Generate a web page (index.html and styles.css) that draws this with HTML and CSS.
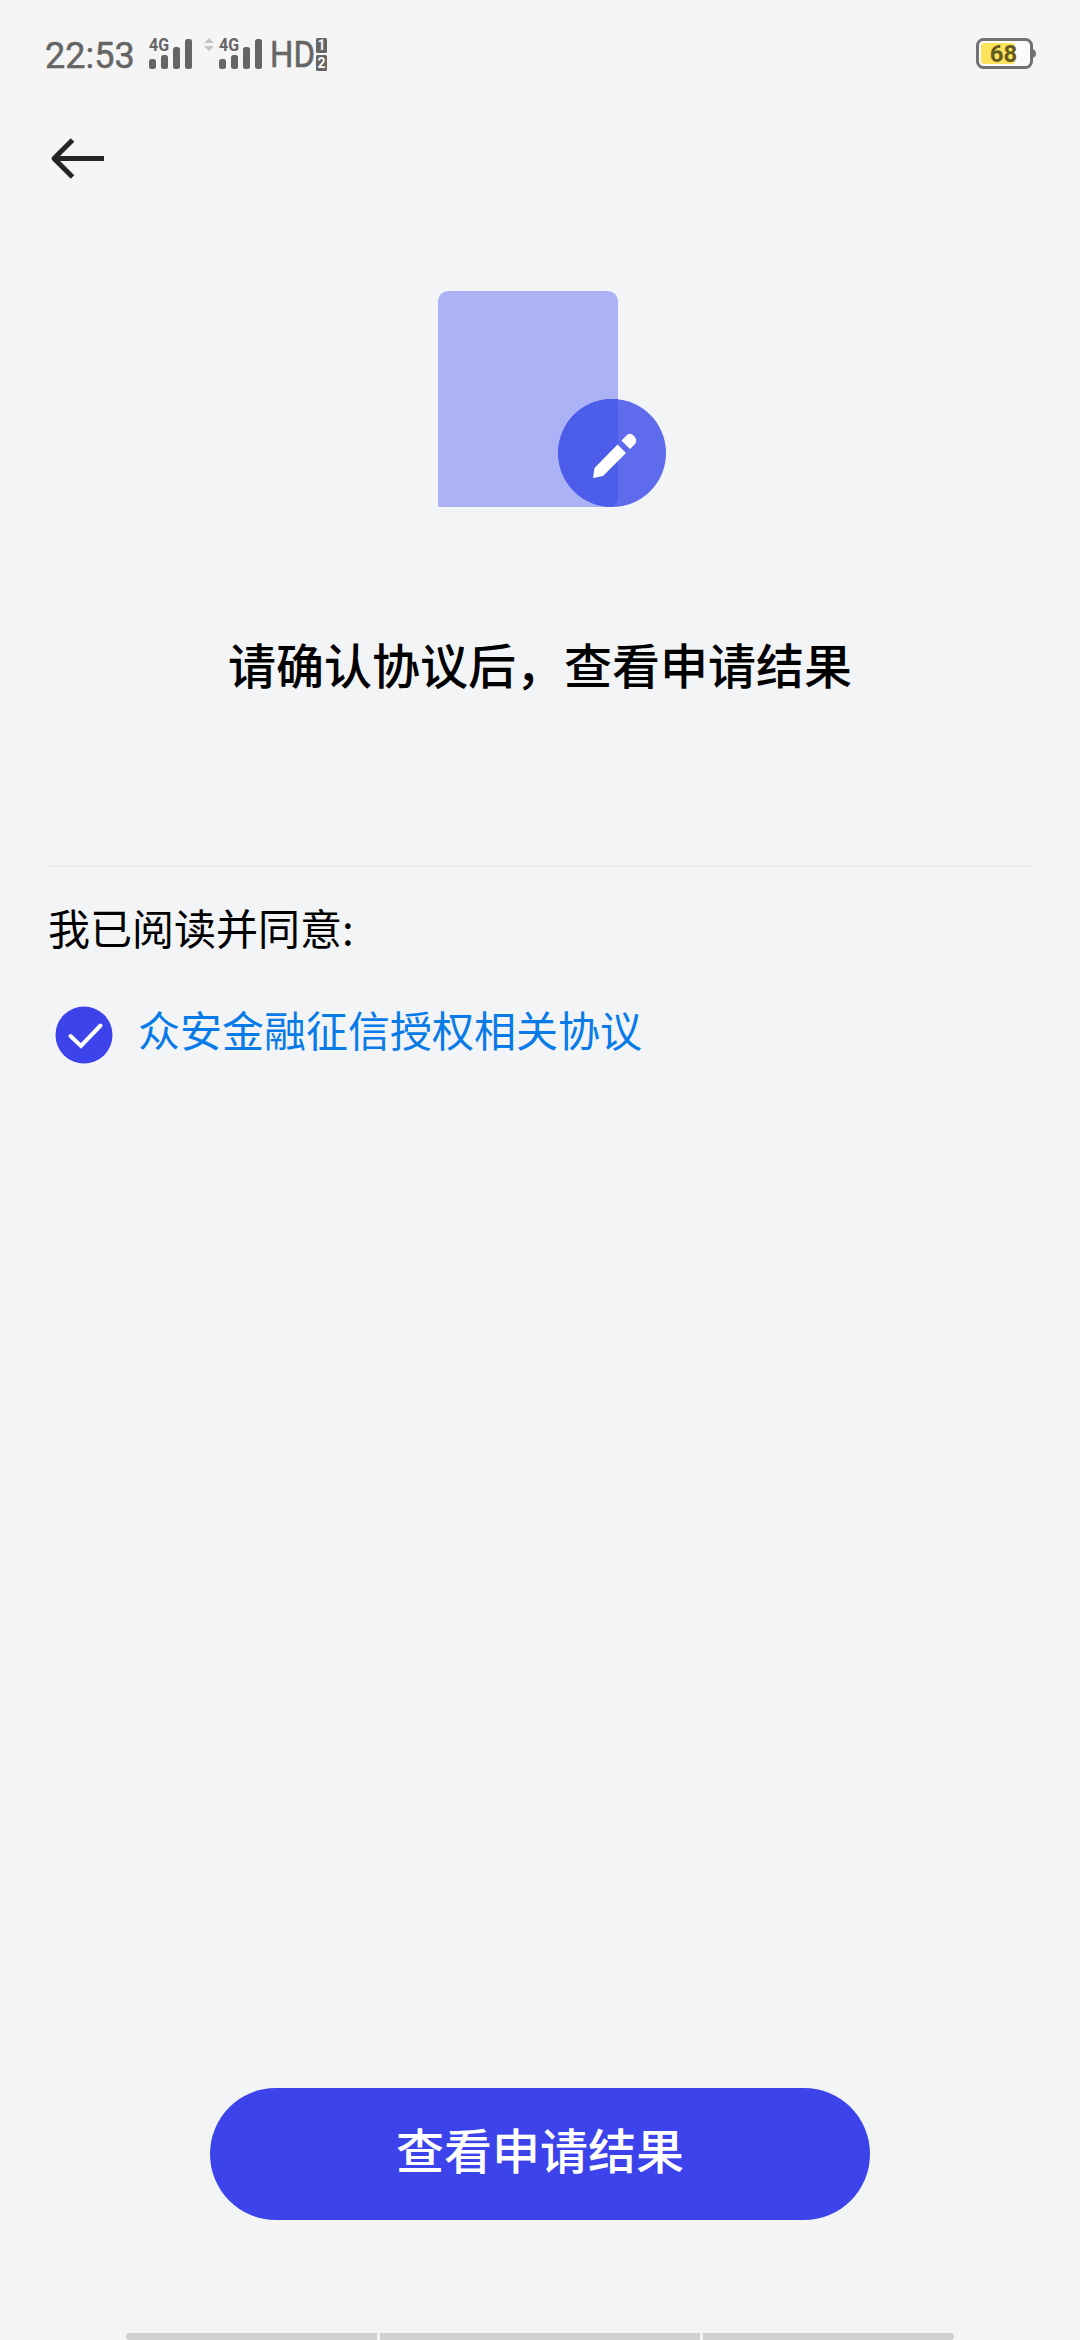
FILE: index.html
```
<!DOCTYPE html>
<html lang="zh-CN">
<head>
<meta charset="utf-8">
<title>查看申请结果</title>
<link rel="stylesheet" href="styles.css">
</head>
<body>
<div class="screen">
  <header class="top">
    <div class="status">
      <span class="clock">22:53</span>
      <svg class="signals" width="187" height="52" viewBox="0 -6 187 52">
        <g fill="#656565">
          <text class="net" x="3" y="15" textLength="20" lengthAdjust="spacingAndGlyphs">4G</text>
          <rect x="3" y="23" width="7" height="10" rx="2.5"/><rect x="15" y="19" width="7" height="14" rx="2.5"/><rect x="27" y="11" width="7" height="22" rx="2.5"/><rect x="39" y="3" width="7" height="30" rx="2.5"/>
          <text class="net" x="73" y="15" textLength="20" lengthAdjust="spacingAndGlyphs">4G</text>
          <rect x="73" y="23" width="7" height="10" rx="2.5"/><rect x="85" y="19" width="7" height="14" rx="2.5"/><rect x="97" y="11" width="7" height="22" rx="2.5"/><rect x="109" y="3" width="7" height="30" rx="2.5"/>
          <text class="hd" x="124" y="31" textLength="45" lengthAdjust="spacingAndGlyphs">HD</text>
          <rect x="170" y="2" width="11" height="15" rx="1.5"/><rect x="170" y="19" width="11" height="16" rx="1.5"/>
        </g>
        <path fill="#c4c4c4" d="M58 7l5-5 5 5zM58 10l5 5 5-5z"/>
        <g fill="#f5f5f5"><text class="sim" x="175.5" y="14">1</text><text class="sim" x="175.5" y="32">2</text></g>
      </svg>
      <svg class="battery" width="62" height="34" viewBox="0 0 62 34">
        <rect x="2.5" y="2.5" width="54" height="28" rx="6" fill="#fbfbfb" stroke="#717273" stroke-width="3"/>
        <path fill="#717273" d="M58 12q3 1.500 3 4.500t-3 4.500z"/>
        <rect x="6" y="6" width="34" height="21" rx="3" fill="#fae45b"/>
        <text class="percent" x="28.500" y="25">68</text>
      </svg>
    </div>
    <div class="nav">
      <svg width="56" height="44" viewBox="0 0 56 44" fill="none" stroke="#242424" stroke-width="5">
        <path d="M23.500 3L5 21.500 23.500 40M5 21.500H55" stroke-linejoin="round"/>
      </svg>
    </div>
  </header>
  <main class="content">
    <svg class="picture" width="228" height="216" viewBox="0 0 228 216">
      <path fill="#abb2f6" d="M0 216V12Q0 0 12 0H168Q180 0 180 12V204Q180 216 168 216z"/>
      <circle cx="174" cy="162" r="54" fill="#3d4de9" fill-opacity=".82"/>
      <path fill="#4c5de9" d="M180 108.300A54 54 0 1 0 174 216Q180 214 180 204z"/>
      <path fill="#fff" d="M155 187L156.500 177 179.500 153.500 188 162 165 185zM183.500 149.500L188.500 144.500Q192 141 196 145 200 149.500 197 153L192 158z"/>
    </svg>
    <h1 class="title">请确认协议后，查看申请结果</h1>
    <section class="agree">
      <p class="lead">我已阅读并同意:</p>
      <div class="row">
        <svg width="58" height="58" viewBox="0 0 58 58"><circle cx="29" cy="29" r="28.500" fill="#3d43eb"/><path d="M15.500 30L26 40 45.500 19.500" fill="none" stroke="#fff" stroke-width="4" stroke-linecap="round"/></svg>
        <a class="link">众安金融征信授权相关协议</a>
      </div>
    </section>
    <button class="submit">查看申请结果</button>
  </main>
  <footer class="gesture"><i></i><i></i><i></i></footer>
</div>
</body>
</html>
```
FILE: styles.css
```
* { box-sizing: border-box; margin: 0; padding: 0; }
body { background: #f2f4f6; font-family: "Noto Sans CJK SC", sans-serif; color: #000; }
.screen { width: 1080px; height: 2340px; display: flex; flex-direction: column; overflow: hidden; }
.top { height: 232px; background: #f5f5f5; }
.status { height: 108px; display: flex; align-items: center; padding: 0 43px 0 45px; }
.clock { font: 36px/40px Roboto, sans-serif; color: #656565; width: 101px; white-space: nowrap; -webkit-text-stroke: .5px #656565; margin-top: 3px; }
.signals { display: block; margin-top: 4px; overflow: visible; }
.net { font: bold 18px Roboto, sans-serif; }
.hd { font: 36px Roboto, sans-serif; stroke: #656565; stroke-width: .6px; }
.sim { font: bold 14px Roboto, sans-serif; text-anchor: middle; }
.battery { margin-left: auto; }
.percent { font: bold 24px Roboto, sans-serif; fill: #655a20; text-anchor: middle; }
.nav { padding: 29px 0 0 49px; }
.content { flex: 1; display: flex; flex-direction: column; align-items: center; }
.picture { margin: 59px 0 0 24px; display: block; }
.title { font-size: 48px; font-weight: 500; line-height: 72px; margin-top: 120px; }
.agree { width: 984px; margin-top: 166px; border-top: 2px solid #e7e9eb; }
.lead { font-size: 42px; line-height: 63px; margin-top: 28px; }
.row { display: flex; align-items: center; padding-left: 7px; margin-top: 48px; gap: 25px; }
.link { font-size: 42px; line-height: 63px; color: #087be8; margin-top: -13px; }
.submit { width: 660px; height: 132px; margin-top: auto; margin-bottom: 113px; border: 0; border-radius: 66px; background: #3d43eb; color: #fff; font: 500 48px/72px "Noto Sans CJK SC", sans-serif; padding-bottom: 12px; }
.gesture { display: flex; justify-content: center; gap: 3px; height: 7px; }
.gesture i { width: 251px; background: #cfd1d3; }
.gesture i:nth-child(2) { width: 320px; }
.gesture i:first-child { border-radius: 4px 0 0 4px; }
.gesture i:last-child { border-radius: 0 4px 4px 0; }
```
